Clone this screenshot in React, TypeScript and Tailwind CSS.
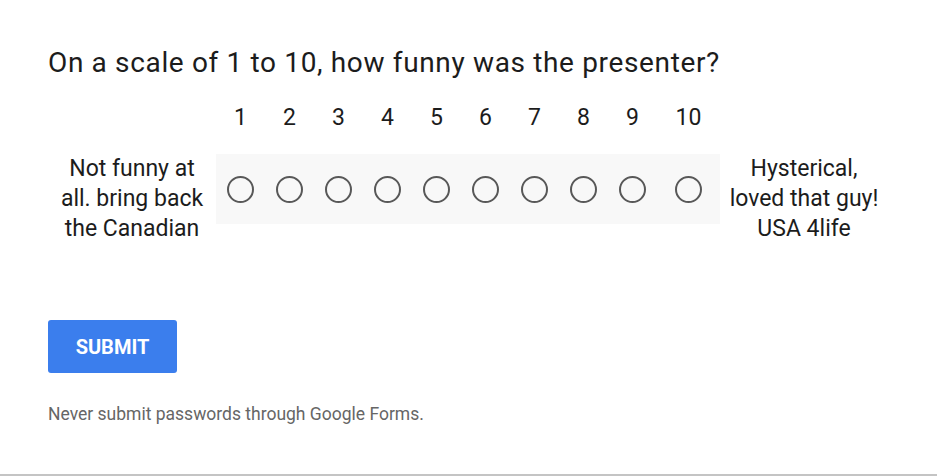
const scale = ["1", "2", "3", "4", "5", "6", "7", "8", "9", "10"];

function Radio() {
  return <span className="block h-[27px] w-[27px] rounded-full border-2 border-[#585858]" />;
}

export default function App() {
  return (
    <div className="relative h-[476px] w-[937px] bg-white font-['Roboto',sans-serif] text-[#1c1c1c]">
      <div className="pl-12 pt-[45px]">
        <h1 className="text-[28px] leading-[36px] tracking-[0.65px]">On a scale of 1 to 10, how funny was the presenter?</h1>

        <div className="mt-[22px] flex pl-[168px]">
          {scale.map((n, i) => (
            <div
              key={n}
              className={`${i === 9 ? "w-[63px]" : "w-[49px]"} text-center text-[23px] leading-[30px]`}
            >
              {n}
            </div>
          ))}
        </div>

        <div className="mt-[21px] flex items-start">
          <div className="flex w-[168px] justify-center">
            <p className="w-[154px] text-center text-[23px] leading-[30px]">Not funny at all. bring back the Canadian</p>
          </div>
          <div className="flex h-[70px] items-center bg-[#f8f8f8]">
            {scale.map((n, i) => (
              <div key={n} className={`${i === 9 ? "w-[63px]" : "w-[49px]"} flex justify-center`}>
                <Radio />
              </div>
            ))}
          </div>
          <div className="flex w-[168px] justify-center">
            <p className="w-[156px] text-center text-[23px] leading-[30px]">Hysterical, loved that guy! USA 4life</p>
          </div>
        </div>

        <button className="mt-[76px] h-[53px] w-[129px] rounded-[3px] bg-[#3b7eed] text-[20px] font-bold text-white">
          SUBMIT
        </button>

        <p className="mt-[29px] text-[17.5px] leading-[24px] text-[#666]">Never submit passwords through Google Forms.</p>
      </div>
      <div className="absolute bottom-0 left-0 h-[2px] w-full bg-[#c4c4c4]" />
    </div>
  );
}
